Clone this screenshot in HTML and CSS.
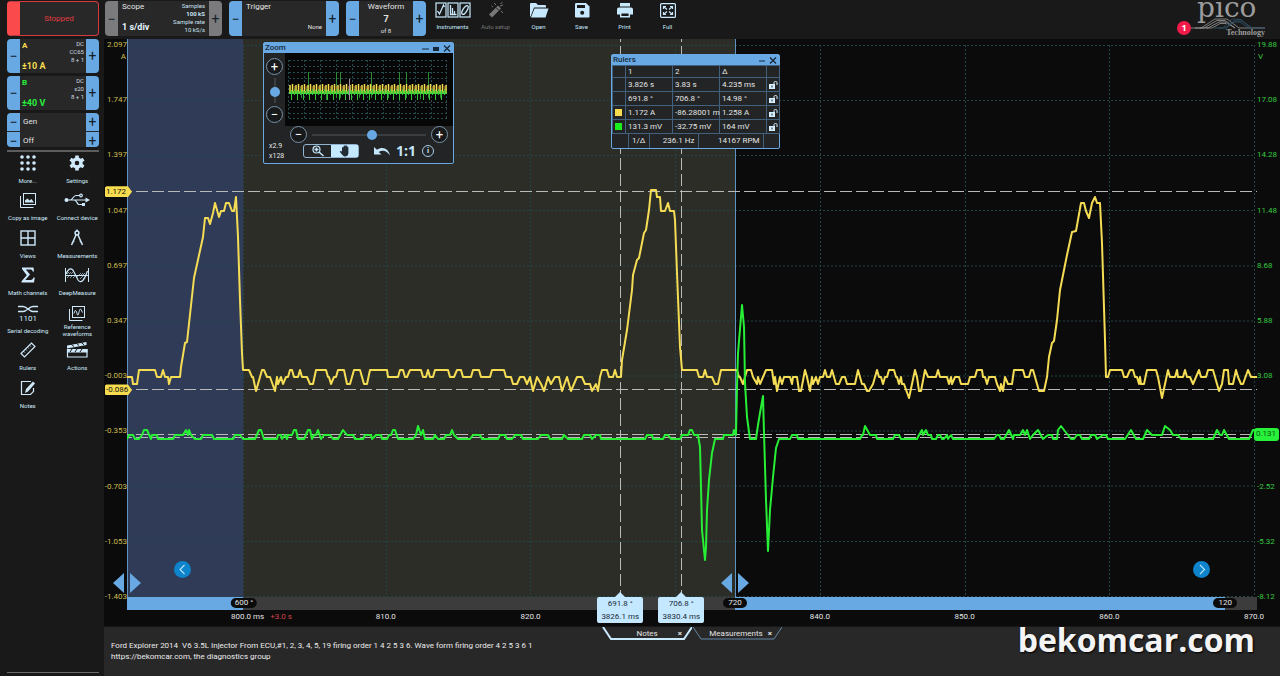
FILE: index.html
```html
<!DOCTYPE html>
<html lang="en">
<head>
  <meta charset="UTF-8">
  <meta name="viewport" content="width=device-width, initial-scale=1.0">
  <title>PicoScope - Waveform 7 of 8</title>
  <link rel="stylesheet" href="styles.css">
</head>
<body>

  <aside class="sidebar">
    <button class="run-state">Stopped</button>

    <div class="channel">
      <button class="step" aria-label="Decrease range A">−</button>
      <div class="channel-body yellow">
        <span class="channel-name">A</span>
        <span class="channel-range">±10 A</span>
        <span class="channel-info">DC<br>CC65<br>8 + 1</span>
      </div>
      <button class="step" aria-label="Increase range A">+</button>
    </div>

    <div class="channel">
      <button class="step" aria-label="Decrease range B">−</button>
      <div class="channel-body green">
        <span class="channel-name">B</span>
        <span class="channel-range">±40 V</span>
        <span class="channel-info">DC<br>x20<br>8 + 1</span>
      </div>
      <button class="step" aria-label="Increase range B">+</button>
    </div>

    <div class="gen">
      <button class="step" aria-label="Previous generator">−</button><span>Gen</span><button class="step" aria-label="Next generator">+</button>
      <button class="step" aria-label="Previous state">−</button><span>Off</span><button class="step" aria-label="Next state">+</button>
    </div>

    <nav class="tools">
      <button class="tool">
        <svg width="26" height="18" viewBox="0 0 26 18" fill="currentColor"><circle cx="7" cy="3" r="1.8"/><circle cx="13" cy="3" r="1.8"/><circle cx="19" cy="3" r="1.8"/><circle cx="7" cy="9" r="1.8"/><circle cx="13" cy="9" r="1.8"/><circle cx="19" cy="9" r="1.8"/><circle cx="7" cy="15" r="1.8"/><circle cx="13" cy="15" r="1.8"/><circle cx="19" cy="15" r="1.8"/></svg>
        More...
      </button>
      <button class="tool">
        <svg width="26" height="18" viewBox="0 0 26 18" fill="none" stroke="currentColor"><circle cx="13" cy="9" r="4" stroke-width="3.4"/><path d="M13 1.4v3M13 13.6v3M6.4 5.2l2.6 1.5M17 11.3l2.6 1.5M6.4 12.8L9 11.3M17 6.7l2.6-1.5" stroke-width="3.6"/></svg>
        Settings
      </button>
      <button class="tool">
        <svg width="26" height="18" viewBox="0 0 26 18" fill="none" stroke="currentColor"><rect x="8.5" y="2.5" width="12" height="11"/><path d="M5.5 5v11.5h13"/><path d="M10 11.5v-2l2.5-2 2 2 2-1.5 2.5 3.5z" fill="currentColor" stroke="none"/></svg>
        Copy as image
      </button>
      <button class="tool">
        <svg width="26" height="18" viewBox="0 0 26 18" fill="none" stroke="currentColor" stroke-width="1.2"><circle cx="2.5" cy="9" r="2" fill="currentColor" stroke="none"/><path d="M3 9h19M6 9c3 0 3-4.5 6-4.5h4M10 9c3 0 3 4.5 5 4.5h3"/><path d="M21.5 6.5L26 9l-4.5 2.5z" fill="currentColor" stroke="none"/><circle cx="17" cy="4.5" r="1.3"/><rect x="18" y="12" width="3" height="3" fill="currentColor" stroke="none"/></svg>
        Connect device
      </button>
      <button class="tool">
        <svg width="26" height="18" viewBox="0 0 26 18" fill="none" stroke="currentColor" stroke-width="1.4"><rect x="6" y="2" width="14" height="14"/><path d="M13 2v14M6 9h14"/></svg>
        Views
      </button>
      <button class="tool">
        <svg width="26" height="18" viewBox="0 0 26 18" fill="none" stroke="currentColor" stroke-width="1.5"><circle cx="13" cy="4" r="1.9"/><path d="M13 .5v2M12 6L7.5 16M14 6l4.5 10M8 14.5l2-3M18 14.5l-2-3"/></svg>
        Measurements
      </button>
      <button class="tool">
        <svg width="26" height="18" viewBox="0 0 26 18" fill="currentColor"><path d="M7 1.500h11.500l.5 4h-1.300c-.4-1.700-1-2.100-2.700-2.100h-4.200L15 8.600l-4.700 5.300h5.400c1.600 0 2.300-.7 2.800-2.400h1.300L19 16.500H6.500v-1.300l5.300-6L7 3z"/></svg>
        Math channels
      </button>
      <button class="tool">
        <svg width="26" height="18" viewBox="0 0 26 18" fill="none" stroke="currentColor"><path d="M1.500 2v14M24.500 2v14M2 9.500h22"/><path d="M3 8l2-2M5 8l2-2M7 8l2-2M3 12l3-3M6 12l3-3M9 12l3-3M12 12l3-3M15 9l2-2M17 9l2-2M19 9l2-2M16 13l3-3M19 13l3-3" stroke-width=".6"/><path d="M2 8c2.500-6 6-7 8-2l4 8c3 4 6 1 9.500-9" stroke-width="1.2"/></svg>
        DeepMeasure
      </button>
      <button class="tool">
        <svg width="26" height="18" viewBox="0 0 26 18"><path d="M3 2.500h5c4 0 6 5 10 5h5M3 7.500h5c4 0 6-5 10-5h5" fill="none" stroke="currentColor" stroke-width="1.5"/><text class="bits" x="13" y="17" text-anchor="middle">1101</text></svg>
        Serial decoding
      </button>
      <button class="tool">
        <svg width="26" height="18" viewBox="0 0 26 18" fill="none" stroke="currentColor"><rect x="8.5" y="2.5" width="12" height="11"/><path d="M5.5 5v11.5h13"/><path d="M10 9.500c1-4 2-4 3 0s1.500 0 2.500-3 1.500-1 3 2"/></svg>
        Reference<br>waveforms
      </button>
      <button class="tool">
        <svg width="26" height="18" viewBox="0 0 26 18" fill="none" stroke="currentColor"><path d="M6 12.500L16.500 2l3.500 3.500L9.500 16z" stroke-width="1.2"/><path d="M8.500 10.200l1.300 1.300M10.500 8.200l1.300 1.300M12.500 6.200l1.300 1.300M14.500 4.200l1.300 1.300"/></svg>
        Rulers
      </button>
      <button class="tool">
        <svg width="26" height="18" viewBox="0 0 26 18"><path d="M3 4.500L22.500 1v3L3 7.500z M3 8h20.500v3.500H3z" fill="currentColor"/><path d="M7 3l3 2.500M12 2l3 2.500M17 1.300l3 2.500M8 8l-2 3M13 8l-2 3M18 8l-2 3" stroke="#191919"/><path d="M3.500 8v8h19.500v-8" fill="none" stroke="currentColor" stroke-width="1.2"/></svg>
        Actions
      </button>
      <button class="tool">
        <svg width="26" height="18" viewBox="0 0 26 18"><path d="M16 2.500H6.500v13h9l3-3V9" fill="none" stroke="currentColor" stroke-width="1.2"/><path d="M10 14l1-4 7-7.500 2 2-7 8z" fill="currentColor"/></svg>
        Notes
      </button>
    </nav>
  </aside>

  <main class="workspace">
    <header class="toolbar">
      <div class="panel scope-panel">
        <button class="step gray" aria-label="Slower">−</button>
        <div class="panel-body">
          <span class="panel-title">Scope</span>
          <strong class="panel-value">1 s/div</strong>
          <span class="samples">Samples<br><b>100 kS</b><br>Sample rate<br>10 kS/s</span>
        </div>
        <button class="step gray" aria-label="Faster">+</button>
      </div>
      <div class="panel trigger-panel">
        <button class="step" aria-label="Previous trigger">−</button>
        <div class="panel-body">
          <span class="panel-title">Trigger</span>
          <span class="trigger-mode">None</span>
        </div>
        <button class="step" aria-label="Next trigger">+</button>
      </div>
      <div class="panel waveform-panel">
        <button class="step" aria-label="Previous waveform">−</button>
        <div class="panel-body centered">
          <span>Waveform</span>
          <strong>7</strong>
          <small>of 8</small>
        </div>
        <button class="step" aria-label="Next waveform">+</button>
      </div>

      <div class="actions">
        <button class="action">
          <svg width="36" height="18" viewBox="0 0 36 18" fill="none" stroke="currentColor"><rect x="1" y="2" width="10" height="14" stroke-width="1.2"/><rect x="13" y="2" width="10" height="14" stroke-width="1.2"/><rect x="25" y="2" width="10" height="14" stroke-width="1.2"/><path d="M2.500 10l2 3 4-9 1 2M15.500 4v9.500h6M17.500 13V7M19.500 13v-3" stroke-width="1.3"/><ellipse cx="30" cy="9" rx="2" ry="5" transform="rotate(32 30 9)" stroke-width="1.3"/></svg>
          Instruments
        </button>
        <button class="action" disabled>
          <svg width="18" height="18" viewBox="0 0 18 18"><path d="M2 13.500L11 4.500l3 3-9 9z" fill="currentColor"/><path d="M9 6.500l3 3" stroke="#191919"/><path d="M7 2l2 2M15.500 1l-2 2M14 10l2 2M4.500 5l1.500 1M13 5l3-1" stroke="currentColor"/></svg>
          Auto setup
        </button>
        <button class="action">
          <svg width="20" height="18" viewBox="0 0 20 18" fill="currentColor"><path d="M1 16V3q0-1 1-1h5l2 2h7q1 0 1 1v1.500H5L1.800 15z"/><path d="M5.500 7.500H19.500L16.500 16.500H2z"/></svg>
          Open
        </button>
        <button class="action">
          <svg width="18" height="18" viewBox="0 0 18 18"><path d="M2 3.200Q2 2 3.200 2H13l3.500 3.500v9.800q0 1.200-1.200 1.200H3.200Q2 16.500 2 15.300z" fill="currentColor"/><path d="M4 4h8v3H4z" fill="#191919"/><circle cx="9.200" cy="11.700" r="2" fill="#191919"/></svg>
          Save
        </button>
        <button class="action">
          <svg width="18" height="18" viewBox="0 0 18 18" fill="currentColor"><path d="M4 2h10v3.500H4zM3 6.500h12q2 0 2 2v5h-3V11H4v2.500H1v-5q0-2 2-2z"/><path d="M4.700 11.700h8.600v4.100H4.700z" fill="none" stroke="currentColor" stroke-width="1.4"/></svg>
          Print
        </button>
        <button class="action">
          <svg width="18" height="18" viewBox="0 0 18 18" fill="none" stroke="currentColor" stroke-width="1.2"><rect x="1.600" y="2.600" width="14.800" height="13.800" rx="1"/><path d="M4.500 8V5.500H7M4.800 5.800L8 8.500M13.500 8V5.500H11M13.200 5.800L10 8.500M4.500 11v2.500H7M4.800 13.200L8 10.500M13.500 11v2.500H11M13.200 13.200L10 10.500"/></svg>
          Full
        </button>
      </div>

      <div class="brand">
        <span class="alerts">1</span>
        <span class="brand-name">pico</span>
        <svg class="brand-lines" viewBox="0 0 76 11" fill="none"><path d="M0 10h12L26 1h12l12 9h26M6 10h9L28 2.500h8L46 10M11 10h8L30 4h6l10 6M17 10h6l8-4.500h6" stroke="#9a9a9a" stroke-width=".8"/><path d="M25 10h9L43 1l9 .5 10 8.500h14M30 10h7l8-6h6l9 6M36 10l9-7h8l10 7" stroke="#31566c" stroke-width=".8"/></svg>
        <span class="brand-sub">Technology</span>
      </div>
    </header>

    <section class="scope">
      <div class="axis axis-left">
        <span>2.097</span><span>1.747</span><span>1.397</span><span>1.047</span><span>0.697</span><span>0.347</span><span>-0.003</span><span>-0.353</span><span>-0.703</span><span>-1.053</span><span>-1.403</span>
        <em class="unit">A</em>
        <b class="level level-top">1.172</b>
        <b class="level level-low">-0.086</b>
      </div>

      <div class="plot">
        <svg class="traces" viewBox="127 39 1130 558" preserveAspectRatio="none">
          <rect x="127" y="39" width="116" height="558" fill="#2f3b57"/>
          <rect x="243" y="39" width="492" height="558" fill="#2c2d27"/>
          <g class="grid-lines">
            <path d="M127 45.500H1254M127 100.500H1254M127 155.500H1254M127 210.500H1254M127 266H1254M127 321H1254M127 376H1254M127 431H1254M127 486H1254M127 541.500H1254M127 596.500H1254"/>
            <path d="M243.500 45V597M386.500 45V597M530.500 45V597M675.500 45V597M820.500 45V597M965.500 45V597M1109.500 45V597M1254.500 45V597"/>
          </g>
          <path class="marker" d="M127.500 39V597M735.500 39V597"/>
          <path class="ruler" d="M120 191.500H1259M120 389.500H1259M120 434.500H1257M120 437.500H1257M620.500 30V597M681.500 30V597"/>
          <polyline class="trace trace-a" points="127,377 132,377 133,384 137,384 139,370 155,370 157,377 161,377 163,370 165,377 168,377 169,384 171,377 180,377 181,367 185,343 187,342 194,278 203,237 205,218 208,218 210,224 213,213 215,203 219,217 221,211 224,211 226,203 229,203 232,211 234,211 236,197 238,237 240,300 242,353 243,370 249,370 252,377 253,377 256,391 262,370 264,370 267,377 270,377 275,391 277,377 278,384 281,377 283,384 286,377 288,377 290,370 292,370 294,377 298,377 300,370 302,377 307,377 310,384 313,384 316,370 326,370 328,377 329,377 331,384 334,377 336,377 338,370 344,370 347,384 350,384 354,370 360,370 364,384 367,384 370,370 387,370 388,377 398,377 400,370 403,370 405,377 407,377 410,370 421,370 423,377 426,377 428,370 430,377 433,377 435,370 448,370 450,377 454,377 457,370 461,370 463,377 471,377 473,370 479,370 481,377 490,377 492,370 504,370 506,377 511,377 513,384 517,384 520,377 524,377 527,384 530,377 533,391 537,377 541,384 544,391 548,377 551,384 555,377 559,377 562,391 567,377 571,391 574,384 577,377 582,377 585,384 590,384 592,391 596,384 598,391 600,377 602,370 607,370 609,377 613,377 615,370 617,377 621,377 622,360 627,330 632,290 633,275 637,260 639,258 644,233 646,230 649,210 651,190 656,190 657,197 660,197 661,211 665,211 668,203 670,211 674,211 675,220 677,273 680,347 682,370 697,370 699,377 703,377 705,370 707,377 712,377 715,384 718,384 721,370 737,370 739,377 740,377 743,384 747,370 751,370 753,377 757,384 758,377 760,384 763,377 766,370 772,370 774,384 775,377 777,391 780,377 782,384 784,377 790,377 792,384 793,377 797,377 799,391 801,391 805,370 807,377 810,391 812,377 813,384 816,377 818,384 820,377 823,377 825,370 827,377 830,377 832,370 836,384 839,384 842,377 845,377 847,384 855,384 858,370 862,384 864,384 867,391 869,391 873,384 877,370 879,377 881,377 883,384 885,377 887,377 889,370 894,370 896,377 897,377 899,384 901,377 902,384 904,384 909,398 915,370 917,377 919,391 921,391 925,370 928,377 936,377 938,370 940,377 947,377 949,384 951,377 952,384 955,377 959,377 961,384 968,384 970,377 975,377 977,370 982,370 983,377 985,377 987,384 989,377 995,377 997,384 1000,391 1001,384 1003,391 1005,377 1008,384 1012,384 1014,370 1023,370 1025,377 1029,377 1031,370 1033,370 1039,391 1044,391 1047,377 1049,357 1052,343 1054,341 1057,320 1060,290 1067,255 1072,232 1076,231 1081,203 1084,203 1086,211 1089,218 1092,203 1095,197 1097,203 1100,203 1102,243 1105,340 1106,377 1108,377 1110,370 1122,370 1124,377 1127,377 1130,370 1133,370 1135,377 1137,377 1139,384 1140,377 1141,384 1144,384 1147,370 1156,370 1158,377 1162,398 1168,370 1170,377 1175,377 1177,370 1178,377 1183,377 1185,370 1187,377 1190,377 1193,384 1196,377 1199,370 1201,377 1206,377 1208,370 1213,370 1215,377 1217,384 1219,391 1222,384 1224,370 1228,370 1229,384 1233,384 1236,370 1238,377 1241,384 1243,384 1248,370 1251,377 1257,377"/>
          <polyline class="trace trace-b" points="127,439 129,435 133,435 135,439 139,439 142,435 144,430 147,430 151,439 152,435 157,435 158,439 173,439 175,435 183,435 186,430 188,435 189,430 191,435 195,439 201,439 203,435 212,435 214,439 233,439 235,435 240,435 243,439 255,439 259,430 261,430 264,439 277,439 278,435 281,435 282,439 285,435 287,439 288,435 292,435 294,430 296,430 298,439 304,439 308,430 310,430 312,439 314,435 316,435 318,430 321,439 324,435 330,435 333,439 338,439 343,430 347,435 353,435 355,439 363,439 365,435 371,435 372,439 376,435 381,435 382,439 387,439 389,435 391,435 393,430 395,430 398,439 413,439 416,435 418,426 421,435 423,430 425,439 433,439 435,435 438,439 444,439 446,435 450,435 452,430 454,435 458,439 470,439 473,435 480,435 482,439 498,439 500,435 505,435 507,439 512,439 515,435 521,435 523,439 538,439 541,435 548,435 550,439 562,439 564,435 568,439 582,439 584,435 590,435 592,439 596,435 600,435 601,439 645,439 647,435 652,435 653,439 663,439 665,435 668,435 671,439 680,439 682,435 688,435 690,430 692,430 694,435 698,435 700,447 701,487 702,530 705,560 706,547 707,510 709,480 712,453 715,439 723,439 724,435 733,435 734,430 736,435 737,387 738,353 742,305 744,327 745,383 747,417 750,439 756,439 758,425 760,413 763,396 764,433 766,500 768,551 770,510 773,477 776,448 779,439 790,439 792,435 797,435 798,439 860,439 862,435 863,435 865,426 870,435 876,435 877,439 893,439 895,435 899,435 901,439 917,439 919,435 922,430 923,435 926,430 928,435 931,435 932,439 936,439 938,435 940,435 942,439 944,439 947,435 948,439 951,435 953,439 994,439 997,435 999,435 1001,439 1004,439 1009,430 1013,439 1014,435 1020,435 1023,430 1025,435 1027,430 1030,439 1033,435 1038,430 1043,439 1048,435 1052,435 1053,439 1057,439 1058,430 1061,426 1064,430 1068,435 1071,439 1074,439 1077,435 1080,435 1082,439 1089,439 1091,435 1095,435 1097,439 1103,435 1106,435 1108,439 1125,439 1131,430 1136,439 1143,439 1147,430 1152,435 1162,435 1165,426 1170,430 1173,435 1178,435 1181,439 1213,439 1217,430 1220,435 1222,435 1224,430 1229,439 1249,439 1253,430 1257,430"/>
        </svg>

        <svg class="handles" style="left: 0%" width="28" height="20" viewBox="0 0 28 20"><path d="M11 0v20L0 10zM17 0v20L28 10z" fill="#69a9e3"/></svg>
        <svg class="handles" style="left: 53.8%" width="28" height="20" viewBox="0 0 28 20"><path d="M11 0v20L0 10zM17 0v20L28 10z" fill="#69a9e3"/></svg>

        <button class="page-btn" style="left: 4.9%" aria-label="Previous"><svg width="17" height="17" viewBox="0 0 17 17"><path d="M10.500 4L6 8.500l4.500 4.500" fill="none" stroke="#b8e4ff" stroke-width="1.1"/></svg></button>
        <button class="page-btn" style="left: 95%" aria-label="Next"><svg width="17" height="17" viewBox="0 0 17 17"><path d="M7 4l4.500 4.500L7 13" fill="none" stroke="#b8e4ff" stroke-width="1.1"/></svg></button>

        <div class="window zoom-window">
          <div class="window-title"><span>Zoom</span>
            <svg width="30" height="9" viewBox="0 0 30 9"><path d="M0 5h7" stroke="#16283a"/><path d="M11 3h6v4h-6z" fill="#16283a"/><path d="M22 1.500l6 6M28 1.500l-6 6" stroke="#16283a" stroke-width="1.3"/></svg>
          </div>
          <div class="zoom-view">
            <div class="zoom-vertical">
              <button class="round" aria-label="Zoom in vertically">+</button>
              <input class="slider vertical" type="range" min="0" max="100" value="37" aria-label="Vertical zoom">
              <button class="round" aria-label="Zoom out vertically">−</button>
            </div>
            <svg class="overview" viewBox="284 53 168 73" preserveAspectRatio="none">
              <defs>
                <pattern id="pulses" x="288" y="84" width="6" height="22" patternUnits="userSpaceOnUse">
                  <path d="M1 1v8M3.500 0v9" stroke="#f6df4c" stroke-width="1.5"/>
                  <path d="M5.300 2v7" stroke="#c77c31" stroke-width=".8"/>
                  <path d="M0 8.500h6" stroke="#7fc63b" stroke-width="3"/>
                  <path d="M2.500 6v10M5.500 5v6" stroke="#38c738" stroke-width="1"/>
                </pattern>
              </defs>
              <rect x="281" y="53" width="171" height="73" fill="#060706"/>
              <path d="M288 60.500H446M288 66.500H446M288 72.500H446M288 78.500H446M288 102.500H446M288 107.500H446M288 113.500H446M288 118.500H446M287.500 60V119M303.500 60V119M319.500 60V119M335.500 60V119M351.500 60V119M366.500 60V119M382.500 60V119M398.500 60V119M414.500 60V119M430.500 60V119M445.500 60V119" stroke="#254b4f" stroke-dasharray="2 2"/>
              <path d="M307.500 72V95M335.500 72V98M339.500 72V98M370.500 72V98M398.500 72V98M405.500 72V98M427.500 72V98M300.500 90v8M325.500 90v10M358.500 90v8M387.500 90v8M419.500 90v9M439.500 90v8" stroke="#2d8b36"/>
              <rect x="288" y="84" width="158" height="22" fill="url(#pulses)"/>
              <path d="M288 93.500H446" stroke="#3ad63a"/>
              <path d="M348.500 79v21" stroke="#a78ba0"/>
            </svg>
          </div>
          <div class="zoom-horizontal">
            <button class="round" aria-label="Zoom out horizontally">−</button>
            <input class="slider" type="range" min="0" max="100" value="53" aria-label="Horizontal zoom">
            <button class="round" aria-label="Zoom in horizontally">+</button>
          </div>
          <div class="zoom-footer">
            <span class="zoom-factors">x2.9<br>x128</span>
            <div class="mode">
              <button aria-label="Zoom mode"><svg width="14" height="12" viewBox="0 0 14 12" fill="none" stroke="#c5e6fb"><circle cx="5.500" cy="4.500" r="3.500" stroke-width="1.2"/><path d="M3.500 4.500h4M5.500 2.500v4M8 7l4.500 4" stroke-width="1.5"/></svg></button>
              <button class="on" aria-label="Pan mode"><svg width="12" height="12" viewBox="0 0 12 12"><path d="M3 6.500V3q0-1 .8-1t.8.800V1.500q0-1 .8-1t.8 1v-.300q0-1 .9-1t.8 1v1q0-.7.7-.7t.8.900V8q0 3-3 3.500H5.500Q4 11 3 9.500L.8 6.800Q1 5.400 3 6.500z" fill="#222c35"/></svg></button>
            </div>
            <button class="undo" aria-label="Undo zoom"><svg width="17" height="11" viewBox="0 0 17 11"><path d="M0 1v7.500h7.500L4.700 6C9 3.500 13 5 16 9.500 15 3 8.500-.5 3 3.800z" fill="#c5e6fb"/></svg></button>
            <button class="one-to-one">1:1</button>
            <button class="info" aria-label="Information">i</button>
          </div>
        </div>

        <div class="window rulers-window">
          <div class="window-title"><span>Rulers</span>
            <svg width="19" height="9" viewBox="0 0 19 9"><path d="M0 5h6" stroke="#16283a"/><path d="M11 1.500l6 6M17 1.500l-6 6" stroke="#16283a" stroke-width="1.3"/></svg>
          </div>
          <table class="rulers">
            <tr><th></th><th>1</th><th>2</th><th>Δ</th><th></th></tr>
            <tr><td></td><td>3.826 s</td><td>3.83 s</td><td>4.235 ms</td><td><svg class="lock" viewBox="0 0 9 8"><path d="M0 3h6v5H0z" fill="#d5efff"/><path d="M5 3V1.500q0-1 1.500-1T8 1.500V4" fill="none" stroke="#d5efff"/><path d="M3 4.500v2" stroke="#282828"/></svg></td></tr>
            <tr><td></td><td>691.8 °</td><td>706.8 °</td><td>14.98 °</td><td><svg class="lock" viewBox="0 0 9 8"><path d="M0 3h6v5H0z" fill="#d5efff"/><path d="M5 3V1.500q0-1 1.500-1T8 1.500V4" fill="none" stroke="#d5efff"/><path d="M3 4.500v2" stroke="#282828"/></svg></td></tr>
            <tr><td><i class="swatch swatch-a"></i></td><td>1.172 A</td><td>-86.28001 m</td><td>1.258 A</td><td><svg class="lock" viewBox="0 0 9 8"><path d="M0 3h6v5H0z" fill="#d5efff"/><path d="M5 3V1.500q0-1 1.500-1T8 1.500V4" fill="none" stroke="#d5efff"/><path d="M3 4.500v2" stroke="#282828"/></svg></td></tr>
            <tr><td><i class="swatch swatch-b"></i></td><td>131.3 mV</td><td>-32.75 mV</td><td>164 mV</td><td><svg class="lock" viewBox="0 0 9 8"><path d="M0 3h6v5H0z" fill="#d5efff"/><path d="M5 3V1.500q0-1 1.500-1T8 1.500V4" fill="none" stroke="#d5efff"/><path d="M3 4.500v2" stroke="#282828"/></svg></td></tr>
          </table>
          <div class="rates"><span>1/Δ</span><span>236.1 Hz</span><span>14167 RPM</span></div>
        </div>
      </div>

      <div class="axis axis-right">
        <span>19.88</span><span>17.08</span><span>14.28</span><span>11.48</span><span>8.68</span><span>5.88</span><span>3.08</span><span>0.28</span><span>-2.52</span><span>-5.32</span><span>-8.12</span>
        <em class="unit">V</em>
        <b class="level level-b">0.131</b>
      </div>

      <div class="phase-bar">
        <i class="phase blue"></i><i class="phase gray"></i><i class="phase blue"></i><i class="phase gray"></i>
        <span class="pill" style="left: 10.35%">600 °</span>
        <span class="pill" style="left: 53.8%">720</span>
        <span class="pill" style="left: 97.2%">120</span>
        <div class="flag" style="left: 43.65%">691.8 °<br>3826.1 ms</div>
        <div class="flag" style="left: 49.05%">706.8 °<br>3830.4 ms</div>
      </div>

      <div class="time-axis">
        <span>800.0 ms <em>+3.0 s</em></span><span>810.0</span><span>820.0</span><span></span><span>840.0</span><span>850.0</span><span>860.0</span><span>870.0</span>
      </div>
    </section>

    <section class="notes">
      <div class="tabs">
        <button class="tab active">
          <svg viewBox="0 0 90 13" preserveAspectRatio="none"><path d="M1 0l8 12h73l8-12"/></svg>
          <span>Notes</span><b>×</b>
        </button>
        <button class="tab">
          <svg viewBox="0 0 90 13" preserveAspectRatio="none"><path d="M1 0l8 12h73l8-12"/></svg>
          <span>Measurements</span><b>×</b>
        </button>
      </div>
      <textarea class="notes-text" aria-label="Notes" spellcheck="false">Ford Explorer 2014  V6 3.5L Injector From ECU,#1, 2, 3, 4, 5, 19 firing order 1 4 2 5 3 6. Wave form firing order 4 2 5 3 6 1
https://bekomcar.com, the diagnostics group</textarea>
      <div class="watermark">bekomcar.com</div>
    </section>
  </main>

</body>
</html>
```

FILE: styles.css
```css
* {
  box-sizing: border-box;
}

body {
  margin: 0;
  min-height: 100vh;
  display: grid;
  grid-template-columns: 104px 1fr;
  background: #191919;
  color: #e4e4e4;
  font-family: Roboto, "Open Sans", sans-serif;
  font-size: 8px;
  line-height: 10px;
  overflow: hidden;
}

button {
  margin: 0;
  padding: 0;
  border: 0;
  background: none;
  color: inherit;
  font: inherit;
  cursor: pointer;
}

svg {
  display: block;
}

/* sidebar */

.sidebar {
  display: flex;
  flex-direction: column;
  gap: 3px;
  padding: 1px 5px 3px 7px;
}

.run-state {
  height: 35px;
  border: 1px solid #d83a40;
  border-left: 13px solid #fb4a4c;
  border-radius: 4px;
  background: #282828;
  color: #e23b40;
}

.channel {
  display: flex;
  height: 34px;
}

.step {
  width: 13px;
  flex: none;
  background: #69a9e3;
  color: #14202c;
  font-size: 14px;
}

.step:first-child {
  border-radius: 4px 0 0 4px;
}

.step:last-child {
  border-radius: 0 4px 4px 0;
}

.step.gray {
  background: #7b7b7d;
}

.channel-body {
  position: relative;
  flex: 1;
  display: flex;
  flex-direction: column;
  justify-content: space-between;
  padding: 2px 2px;
  background: #282828;
  font-weight: 700;
}

.channel-range {
  font-size: 9px;
}

.yellow {
  color: #f6dc4e;
}

.green {
  color: #27f13b;
}

.channel-info {
  position: absolute;
  top: 1px;
  right: 2px;
  color: #cdd9e2;
  font-size: 6px;
  font-weight: 400;
  line-height: 8px;
  text-align: right;
}

.gen {
  display: grid;
  grid-template-columns: 13px 1fr 13px;
  row-gap: 1px;
  height: 34px;
  border-radius: 4px;
  overflow: hidden;
  background: #282828;
}

.gen .step {
  border-radius: 0;
}

.gen span {
  padding: 4px 3px;
}

.tools {
  display: grid;
  grid-template-columns: 1fr 1fr;
  grid-template-rows: repeat(7, 1fr);
  height: 266px;
  margin: 0 -3px 0 -4px;
  padding-top: 4px;
  position: relative;
}

.tools::before {
  content: "";
  position: absolute;
  top: 0;
  left: 4px;
  right: 3px;
  height: 2px;
  background: #5d5d5d;
}

.sidebar::after {
  content: "";
  margin-top: auto;
  height: 1px;
  background: #6b6b6b;
}

.tool {
  display: flex;
  flex-direction: column;
  align-items: center;
  justify-content: flex-start;
  color: #cfe9fb;
  font-size: 6px;
  line-height: 7px;
  white-space: nowrap;
}

.tool svg {
  margin-bottom: 5px;
}

.tool:nth-child(10) svg {
  margin-bottom: 1px;
}

.bits {
  fill: currentColor;
  font-size: 8px;
}

/* toolbar */

.workspace {
  display: grid;
  grid-template-rows: 39px 1fr 50px;
  min-width: 0;
  height: 100vh;
}

.toolbar {
  display: flex;
  gap: 7px;
  padding: 1px 1px 3px;
}

.panel {
  display: flex;
}

.panel-body {
  position: relative;
  flex: 1;
  display: flex;
  flex-direction: column;
  justify-content: space-between;
  padding: 1px 4px 4px;
  background: #282828;
}

.scope-panel {
  width: 117px;
}

.trigger-panel {
  width: 110px;
}

.waveform-panel {
  width: 80px;
}

.panel-value {
  color: #e6f5ff;
  font-size: 9px;
}

.samples {
  position: absolute;
  top: 1px;
  right: 4px;
  color: #c8e2f4;
  font-size: 6px;
  line-height: 8px;
  text-align: right;
}

.trigger-mode {
  align-self: flex-end;
  font-size: 6px;
}

.centered {
  align-items: center;
  padding-bottom: 0;
}

.centered strong {
  font-size: 9px;
}

.centered small {
  font-size: 6px;
}

.actions {
  display: flex;
  margin-left: -2px;
}

.action {
  width: 43px;
  display: flex;
  flex-direction: column;
  align-items: center;
  color: #c8e9fd;
  font-size: 6px;
}

.action svg {
  margin-bottom: 3px;
}

.action:disabled {
  color: #777;
}

.brand {
  position: relative;
  margin-left: auto;
  margin-right: 14px;
  width: 76px;
  font-family: "Liberation Serif", serif;
  color: #9c9c9c;
}

.brand-name {
  position: absolute;
  top: -7px;
  left: 8px;
  font-family: "DejaVu Serif", serif;
  font-size: 28px;
  line-height: 28px;
}

.brand-lines {
  position: absolute;
  top: 17px;
  left: 0;
  width: 76px;
}

.brand-sub {
  position: absolute;
  right: 0;
  bottom: -2px;
  font-size: 8px;
  font-weight: 700;
}

.alerts {
  position: absolute;
  z-index: 1;
  left: -12px;
  top: 20px;
  width: 14px;
  height: 14px;
  border-radius: 50%;
  background: #f21c4b;
  color: #fff;
  font: 700 9px/14px "Open Sans", sans-serif;
  text-align: center;
}

/* scope view */

.scope {
  display: grid;
  grid-template-columns: 23px 1fr 23px;
  grid-template-rows: 1fr 13px 16px;
  background: #0b0b0b;
}

.axis {
  position: relative;
  grid-row: 1 / 3;
  display: flex;
  flex-direction: column;
  justify-content: space-between;
  padding: 1px 0 8px;
  white-space: nowrap;
}

.axis-left {
  align-items: flex-end;
  color: #cdbb50;
}

.axis-right {
  grid-column: 3;
  color: #36c840;
}

.unit {
  position: absolute;
  top: 13px;
  right: 1px;
  font-style: normal;
}

.axis-right .unit {
  right: auto;
  left: 1px;
}

.level {
  position: absolute;
  z-index: 2;
  left: 1px;
  width: 27px;
  height: 11px;
  padding-left: 1px;
  background: #f6dc4e;
  color: #111;
  font-weight: 400;
  line-height: 11px;
  clip-path: polygon(0 10%, 5% 0, 85% 0, 100% 50%, 85% 100%, 5% 100%, 0 90%);
}

.level-top {
  top: 25.8%;
}

.level-low {
  top: 60.5%;
}

.level-b {
  top: 68.1%;
  left: -3px;
  width: 25px;
  height: 13px;
  padding-left: 2px;
  border-radius: 3px;
  background: #27f13b;
  color: #0f5216;
  clip-path: none;
}

.plot {
  position: relative;
  grid-column: 2;
  grid-row: 1;
  min-height: 0;
}

.traces {
  position: absolute;
  width: 100%;
  height: 100%;
}

.grid-lines {
  fill: none;
  stroke: #234549;
  stroke-dasharray: 2 2;
}

.marker {
  fill: none;
  stroke: #5e93c4;
}

.ruler {
  fill: none;
  stroke: #b9b9b9;
  stroke-dasharray: 12 4;
}

.trace {
  fill: none;
  stroke-width: 2;
  stroke-linejoin: round;
  vector-effect: non-scaling-stroke;
}

.trace-a {
  stroke: #f5dc55;
}

.trace-b {
  stroke: #27ef35;
}

.handles {
  position: absolute;
  z-index: 2;
  bottom: 4px;
  margin-left: -14px;
}

.page-btn {
  position: absolute;
  bottom: 19px;
  margin-left: -8px;
  border-radius: 50%;
  background: #0d84cb;
}

/* floating windows */

.window {
  position: absolute;
  border: 1px solid #69a9e3;
  border-radius: 2px;
  background: #222426;
}

.window-title {
  display: flex;
  align-items: center;
  justify-content: space-between;
  height: 10px;
  padding: 0 1px;
  background: #69a9e3;
  color: #16283a;
  font-weight: 500;
}

.zoom-window {
  left: 136px;
  top: 3px;
  width: 191px;
  height: 122px;
}

.zoom-view {
  display: flex;
  height: 73px;
}

.zoom-vertical {
  display: flex;
  flex-direction: column;
  align-items: center;
  width: 21px;
  padding-top: 5px;
  gap: 3px;
}

.overview {
  flex: 1;
  height: 73px;
}

.round {
  flex: none;
  width: 17px;
  height: 17px;
  border: 1px solid #7a93a8;
  border-radius: 50%;
  background: #17191b;
  color: #fff;
  font-size: 13px;
  line-height: 13px;
}

.slider {
  appearance: none;
  flex: 1;
  min-width: 0;
  height: 10px;
  margin: 0;
  background: linear-gradient(#3c3f42, #3c3f42) center / 100% 2px no-repeat;
}

.slider::-webkit-slider-thumb {
  appearance: none;
  width: 10px;
  height: 10px;
  border-radius: 50%;
  background: #69a9e3;
}

.slider.vertical {
  flex: none;
  writing-mode: vertical-lr;
  direction: rtl;
  width: 10px;
  height: 25px;
  background: linear-gradient(#3c3f42, #3c3f42) center / 2px 100% no-repeat;
}

.zoom-horizontal {
  display: flex;
  align-items: center;
  gap: 5px;
  height: 17px;
  padding: 0 5px 0 26px;
}

.zoom-footer {
  display: flex;
  align-items: center;
  height: 16px;
  padding-left: 5px;
}

.zoom-factors {
  width: 34px;
  font-size: 7px;
}

.mode {
  display: flex;
  width: 56px;
  height: 14px;
  border: 1px solid #8fb3d0;
  border-radius: 3px;
}

.mode button {
  flex: 1;
  display: grid;
  place-items: center;
}

.mode .on {
  background: #c5e9ff;
}

.undo {
  margin-left: 15px;
}

.one-to-one {
  margin-left: 5px;
  color: #c5e6fb;
  font-family: "Open Sans", sans-serif;
  font-size: 14px;
  font-weight: 700;
}

.info {
  width: 12px;
  height: 12px;
  margin-left: 6px;
  border: 1px solid #a9cbe4;
  border-radius: 50%;
  color: #c5e6fb;
  font-weight: 700;
}

.rulers-window {
  left: 484px;
  top: 15px;
  width: 169px;
}

.rulers {
  width: 100%;
  table-layout: fixed;
  border-collapse: collapse;
}

.rulers th,
.rulers td {
  width: 47px;
  height: 14px;
  padding: 0 0 0 2px;
  border: 1px solid #41617e;
  font-weight: 400;
  text-align: left;
  white-space: nowrap;
}

.rulers th {
  height: 12px;
}

.rulers th:first-child {
  width: 13px;
}

.rulers th:last-child {
  width: 13px;
}

.swatch {
  display: block;
  width: 7px;
  height: 7px;
}

.swatch-a {
  background: #f6dc4e;
}

.swatch-b {
  background: #19f01d;
}

.lock {
  width: 9px;
  height: 8px;
}

.rates {
  display: grid;
  grid-template-columns: 21px 49px 66px;
  justify-content: center;
  height: 14px;
  line-height: 14px;
}

.rates span {
  padding-right: 3px;
  border-left: 1px solid #41617e;
  text-align: right;
}

.rates span:last-child {
  border-right: 1px solid #41617e;
}

/* bar and time axis below the plot */

.phase-bar {
  position: relative;
  grid-column: 2;
  grid-row: 2;
  display: grid;
  grid-template-columns: 116fr 492fr 490fr 32fr;
}

.phase.blue {
  background: #69a9e3;
}

.phase.gray {
  background: #3c3c3c;
}

.pill {
  position: absolute;
  top: 1px;
  min-width: 24px;
  padding: 0 4px;
  border-radius: 5px;
  background: #0b0b0b;
  text-align: center;
  transform: translateX(-50%);
}

.flag {
  position: absolute;
  z-index: 1;
  top: 0;
  width: 46px;
  border-radius: 2px;
  background: #c3e8ff;
  color: #1b2b38;
  line-height: 13px;
  text-align: center;
  transform: translateX(-50%);
}

.flag::before {
  content: "";
  position: absolute;
  left: 18px;
  top: -5px;
  border: 5px solid transparent;
  border-top: 0;
  border-bottom-color: #c3e8ff;
}

.time-axis {
  grid-column: 1 / 4;
  grid-row: 3;
  display: grid;
  grid-template-columns: repeat(7, 1fr) 36px;
  padding: 2px 0 0 127px;
  white-space: nowrap;
}

.time-axis em {
  margin-left: 4px;
  color: #d4444b;
  font-style: normal;
}

/* notes */

.notes {
  position: relative;
  display: flex;
  flex-direction: column;
  border-top: 1px solid #171717;
  background: #282828;
}

.tabs {
  display: flex;
  justify-content: center;
}

.tab {
  position: relative;
  display: flex;
  justify-content: flex-end;
  gap: 5px;
  width: 90px;
  height: 13px;
  padding: 1px 10px 0 0;
  line-height: 12px;
}

.tab.active {
  gap: 20px;
}

.tab svg {
  position: absolute;
  inset: 0;
  width: 100%;
  height: 100%;
  fill: none;
  stroke: #6489a8;
}

.tab.active svg {
  stroke: #c9e9fd;
  stroke-width: 2;
}

.notes-text {
  flex: 1;
  padding: 0 7px;
  border: 0;
  outline: 0;
  resize: none;
  overflow: hidden;
  background: transparent;
  color: #ececec;
  font-family: inherit;
  font-size: 8px;
  line-height: 11px;
}

.watermark {
  position: absolute;
  right: 25px;
  top: -3px;
  color: #f4f4f4;
  font-family: "Open Sans", sans-serif;
  font-size: 32px;
  font-weight: 700;
  line-height: 32px;
  text-shadow: 1px 1px 2px #000;
  pointer-events: none;
}
```
